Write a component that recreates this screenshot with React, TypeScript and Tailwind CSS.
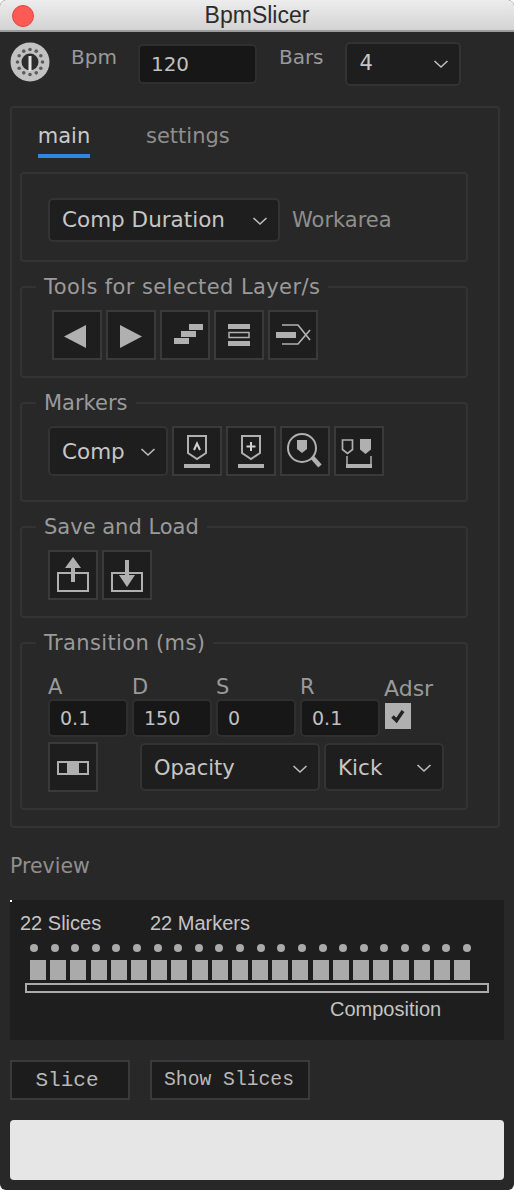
import type { ReactNode } from "react";

const sans = "font-['DejaVu_Sans',sans-serif]";
const ink = "#b0b0b0";

function Chevron() {
  return (
    <svg width="16" height="10" viewBox="0 0 16 10" fill="none" className="shrink-0">
      <path d="M1.5 2 L8 8 L14.5 2" stroke="#bdbdbd" strokeWidth="1.6" />
    </svg>
  );
}

function Select({ label, className }: { label: string; className: string }) {
  return (
    <div className={`flex items-center justify-between rounded-[5px] border-2 border-[#333] bg-[#1e1e1e] text-[#c6c6c6] ${className}`}>
      <span>{label}</span>
      <Chevron />
    </div>
  );
}

function Field({ value, className }: { value: string; className: string }) {
  return (
    <div className={`flex items-center rounded-[5px] border-2 border-[#2f2f2f] bg-[#171717] text-[#c0c0c0] ${className}`}>
      {value}
    </div>
  );
}

// svg coords are button coords (50x50 including the 2px border)
function IconButton({ children }: { children: ReactNode }) {
  return (
    <button className="flex h-[50px] w-[50px] shrink-0 items-center justify-center border-2 border-[#3a3a3a] bg-[#1e1e1e]">
      <svg width="46" height="46" viewBox="2 2 46 46" fill="none">
        {children}
      </svg>
    </button>
  );
}

function Group({ title, legend, className, children }: { title: string; legend?: string; className: string; children: ReactNode }) {
  return (
    <fieldset className="mt-3 w-[448px] rounded-[4px] border-2 border-[#333]">
      <legend className={`ml-[14px] h-[26px] px-2 text-[21px] leading-[26px] text-[#9a9a9a] ${legend ?? ""}`}>{title}</legend>
      <div className={className}>{children}</div>
    </fieldset>
  );
}

const shield = "M16 10 H34 V27 L25 33 L16 27 Z";
const slices = Array.from({ length: 22 }, (_, i) => i);

export default function App() {
  return (
    <div className={`relative h-[1190px] w-[514px] overflow-hidden rounded-[6px] bg-[#282828] ${sans}`}>
      {/* Title bar */}
      <div className="relative flex h-[32px] items-center justify-center border-b-2 border-[#9c9c9c] bg-gradient-to-b from-[#ededed] to-[#d3d3d3] text-[23px] text-[#2c2c2c] font-['Liberation_Sans',sans-serif]">
        BpmSlicer
        <div className="absolute left-[12px] top-[5px] h-[22px] w-[22px] rounded-full border border-[#e5443f] bg-[#fc5a55]" />
      </div>

      <div className="px-[10px]">
        {/* Top row */}
        <div className="flex h-[74px] items-start">
          <svg width="40" height="40" viewBox="0 0 40 40" className="mt-[10px] shrink-0">
            <circle cx="20" cy="20" r="19.5" fill="#c2c2c2" />
            <circle cx="20" cy="20" r="8.5" fill="#2e2e2e" />
            {Array.from({ length: 12 }, (_, i) => {
              const a = (i * Math.PI) / 6;
              return <circle key={i} cx={20 + 12.5 * Math.cos(a)} cy={20 + 12.5 * Math.sin(a)} r="1.8" fill="#5c5c5c" />;
            })}
            <rect x="18.5" y="14" width="3" height="15" fill="#e4e4e4" />
          </svg>
          <span className="ml-[21px] mt-[11px] text-[20px] leading-[28px] text-[#9a9a9a]">Bpm</span>
          <Field value="120" className="ml-[21px] mt-[12px] h-[40px] w-[119px] pl-[11px] text-[20px]" />
          <span className="ml-[22px] mt-[11px] text-[20px] leading-[28px] text-[#9a9a9a]">Bars</span>
          <Select label="4" className="ml-[21px] mt-[10px] h-[44px] w-[116px] pl-[13px] pr-[10px] text-[21px]" />
        </div>

        {/* Main panel */}
        <div className="w-[490px] rounded-[4px] border-2 border-[#333] px-2 pb-4">
          <div className="flex h-[64px] items-start pl-[18px] text-[21px] leading-[28px]">
            <div className="mt-[14px] flex h-[36px] w-[52px] justify-center border-b-4 border-[#2f86e0] text-[#cacaca]">main</div>
            <div className="ml-[56px] mt-[14px] text-[#8f8f8f]">settings</div>
          </div>

          <div className="flex h-[90px] w-[448px] items-start rounded-[4px] border-2 border-[#333] pl-[26px] pt-6">
            <Select label="Comp Duration" className="h-[44px] w-[232px] pl-[12px] pr-[10px] pt-[1px] text-[21.5px]" />
            <span className="ml-3 text-[21px] leading-[44px] text-[#8f8f8f]">Workarea</span>
          </div>

          <Group title="Tools for selected Layer/s" legend="tracking-[0.4px]" className="pb-4 pl-[30px] pt-[10px]">
            <div className="flex gap-1">
              <IconButton>
                <polygon points="12,26.5 34,15 34,38" fill={ink} />
              </IconButton>
              <IconButton>
                <polygon points="14,15 36,26.5 14,38" fill={ink} />
              </IconButton>
              <IconButton>
                <rect x="14" y="28" width="15" height="6" fill={ink} />
                <rect x="21" y="21" width="15" height="6" fill={ink} />
                <rect x="29" y="14" width="14" height="6" fill={ink} />
              </IconButton>
              <IconButton>
                <rect x="14" y="14" width="22" height="5" fill={ink} />
                <rect x="15" y="22.5" width="20" height="5" stroke={ink} strokeWidth="1.5" />
                <rect x="14" y="31" width="22" height="5" fill={ink} />
              </IconButton>
              <IconButton>
                <rect x="8" y="22" width="20" height="6" fill={ink} />
                <path d="M14 15 H30 L42 30 M14 34 H30 L42 20" stroke={ink} strokeWidth="1.7" />
              </IconButton>
            </div>
          </Group>

          <Group title="Markers" className="pb-6 pl-[26px] pt-[10px]">
            <div className="flex gap-1">
              <Select label="Comp" className="h-[50px] w-[120px] pl-[12px] pr-[10px] pt-[2px] text-[21.5px]" />
              <IconButton>
                <path d={shield} stroke={ink} strokeWidth="2" />
                <path d="M22 24 L25 17.5 L28 24" stroke="#d0d0d0" strokeWidth="2" />
                <rect x="12" y="38" width="26" height="4" fill={ink} />
              </IconButton>
              <IconButton>
                <path d={shield} stroke={ink} strokeWidth="2" />
                <path d="M25 16 V25 M20.5 20.5 H29.5" stroke="#d0d0d0" strokeWidth="2" />
                <rect x="12" y="38" width="26" height="4" fill={ink} />
              </IconButton>
              <IconButton>
                <circle cx="22" cy="22" r="14" stroke={ink} strokeWidth="2" />
                <path d="M17 14 H27 V23 L22 27 L17 23 Z" fill={ink} />
                <path d="M32 31 L40 40" stroke={ink} strokeWidth="4.5" />
              </IconButton>
              <IconButton>
                <path d="M8.5 14 H18.5 V23.5 L13.5 27.5 L8.5 23.5 Z" stroke={ink} strokeWidth="1.7" />
                <path d="M26 13 H37 V23.5 L31.5 28 L26 23.5 Z" fill={ink} />
                <path d="M13 30 V40 H37 V30" stroke={ink} strokeWidth="1.5" />
                <rect x="12" y="38" width="26" height="4" fill={ink} />
              </IconButton>
            </div>
          </Group>

          <Group title="Save and Load" className="pb-4 pl-[26px] pt-[10px]">
            <div className="flex gap-1">
              <IconButton>
                <rect x="10" y="23" width="30" height="18" stroke={ink} strokeWidth="2" />
                <polygon points="25,7 33,18 27,18 27,32 23,32 23,18 17,18" fill={ink} />
              </IconButton>
              <IconButton>
                <rect x="10" y="23" width="30" height="18" stroke={ink} strokeWidth="2" />
                <polygon points="23,10 27,10 27,25 33,25 25,37 17,25 23,25" fill={ink} />
              </IconButton>
            </div>
          </Group>

          <Group title="Transition (ms)" legend="tracking-[0.35px]" className="pb-4 pl-[26px] pt-4">
            <div className="flex gap-1">
              {[
                ["A", "0.1"],
                ["D", "150"],
                ["S", "0"],
                ["R", "0.1"],
              ].map(([label, value]) => (
                <div key={label} className="w-[80px]">
                  <div className="h-[27px] text-[21px] leading-[30px] text-[#9a9a9a]">{label}</div>
                  <Field value={value} className="h-[38px] w-[80px] pl-[10px] text-[19px]" />
                </div>
              ))}
              <div>
                <div className="mt-[3px] h-[28px] text-[22px] leading-[28px] text-[#9a9a9a]">Adsr</div>
                <div className="ml-[1px] flex h-[26px] w-[26px] items-center justify-center bg-[#b0b0b0]">
                  <svg width="16" height="16" viewBox="0 0 16 16" fill="none">
                    <path d="M2.5 8.5 L6.5 12.5 L13 3" stroke="#222" strokeWidth="3.5" />
                  </svg>
                </div>
              </div>
            </div>
            <div className="mt-[5px] flex items-center">
              <IconButton>
                <rect x="10" y="20" width="30" height="12" stroke={ink} strokeWidth="2" />
                <rect x="19" y="19" width="12" height="14" fill={ink} />
              </IconButton>
              <Select label="Opacity" className="ml-[42px] h-[48px] w-[180px] pl-[12px] pr-[10px] pt-[3px] text-[21px]" />
              <Select label="Kick" className="ml-1 h-[48px] w-[120px] pl-[12px] pr-[10px] pt-[2px] text-[21.5px]" />
            </div>
          </Group>
        </div>

        {/* Preview */}
        <div className="mt-6 text-[20.5px] leading-[28px] text-[#8f8f8f]">Preview</div>
        <div className="relative mt-5 h-[140px] w-[494px] bg-[#1e1e1e] pt-3 font-['Liberation_Sans',sans-serif] text-[20px] leading-[22px] text-[#c4c4c4]">
          <div className="absolute left-0 top-0 h-[2px] w-[2px] bg-white" />
          <div className="flex pl-[10px]">
            <span className="w-[130px]">22 Slices</span>
            <span>22 Markers</span>
          </div>
          <div className="ml-[20px] mt-[10px] flex w-[441px] justify-between">
            {slices.map((i) => (
              <div key={i} className="h-[8px] w-[8px] rounded-full bg-[#aaaaaa]" />
            ))}
          </div>
          <div className="ml-[20px] mt-[8px] flex w-[440px] justify-between">
            {slices.map((i) => (
              <div key={i} className="h-[20px] w-[16px] bg-[#aaaaaa]" />
            ))}
          </div>
          <div className="ml-[15px] mt-[3px] h-[10px] w-[464px] border-2 border-[#aaaaaa]" />
          <div className="ml-[320px] mt-[5px]">Composition</div>
        </div>

        {/* Actions */}
        <div className="mt-5 flex gap-5 font-['Liberation_Mono',monospace] text-[#b8b8b8]">
          <button className="h-[40px] w-[120px] border-2 border-[#3a3a3a] bg-[#1c1c1c] pr-[6px] pt-[1px] text-[21px]">Slice</button>
          <button className="h-[40px] w-[160px] border-2 border-[#3a3a3a] bg-[#1c1c1c] pr-[2px] pt-[1px] text-[19.7px]">Show Slices</button>
        </div>
        <div className="mt-5 h-[60px] w-[494px] rounded-[4px] bg-[#e6e6e6]" />
      </div>
    </div>
  );
}
